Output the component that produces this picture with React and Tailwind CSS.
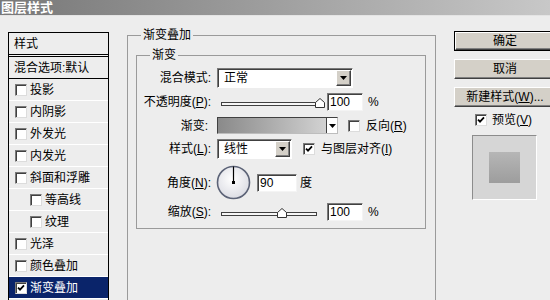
import React from "react";

const Arrow = () => (
  <svg width="7" height="4" viewBox="0 0 7 4">
    <path d="M0 0H7L3.5 4Z" fill="#000" />
  </svg>
);

const Check = ({ checked }) => (
  <span className="flex h-[12px] w-[12px] shrink-0 items-center justify-center border border-t-[#7a7a7a] border-l-[#7a7a7a] border-r-[#dcdcdc] border-b-[#dcdcdc] bg-white shadow-[inset_1px_1px_0_#404040]">
    {checked && (
      <svg width="8" height="8" viewBox="0 0 8 8">
        <path d="M1 3.6L3 5.6L7 1.4" fill="none" stroke="#000" strokeWidth="1.8" />
      </svg>
    )}
  </span>
);

const DropBtn = () => (
  <span className="flex h-full w-[15px] shrink-0 items-center justify-center border border-t-white border-l-white border-r-[#404040] border-b-[#404040] bg-[#d4d0c8] shadow-[inset_-1px_-1px_0_#808080]">
    <Arrow />
  </span>
);

const Select = ({ value, width }) => (
  <div
    className="flex h-[20px] shrink-0 items-stretch border border-t-[#7a7a7a] border-l-[#7a7a7a] border-r-white border-b-white bg-white p-[1px] pl-[6px] shadow-[inset_1px_1px_0_#404040]"
    style={{ width }}
  >
    <span className="flex flex-1 items-center">{value}</span>
    <DropBtn />
  </div>
);

const Field = ({ value, width }) => (
  <div
    className="flex h-[18px] shrink-0 items-center border border-t-[#7a7a7a] border-l-[#7a7a7a] border-r-[#f4f4f4] border-b-[#f4f4f4] bg-white pl-[2px] shadow-[inset_1px_1px_0_#404040]"
    style={{ width }}
  >
    {value}
  </div>
);

const Slider = ({ thumb }) => (
  <div className="relative ml-[4px] h-[18px] w-[96px] shrink-0">
    <div className="mt-[9px] h-[4px] border border-[#404040] bg-[#f6f6f6]" />
    <svg
      className="absolute top-[5px]"
      style={{ left: thumb }}
      width="10"
      height="10"
      viewBox="0 0 10 10"
    >
      <path d="M0.5 9.5V4.5L5 0.5L9.5 4.5V9.5Z" fill="#fff" stroke="#333" />
    </svg>
  </div>
);

const Label = ({ children }) => (
  <span className="mr-[6px] w-[74px] shrink-0 text-right">{children}</span>
);

const Btn = ({ children, def }) => (
  <div className={def ? "border border-black" : ""}>
    <div
      className={
        "flex items-center justify-center border border-t-white border-l-white border-r-[#404040] border-b-[#404040] bg-[#d4d0c8] shadow-[inset_-1px_-1px_0_#808080] " +
        (def ? "h-[18px]" : "h-[20px]")
      }
    >
      {children}
    </div>
  </div>
);

const items = [
  { t: "投影" },
  { t: "内阴影" },
  { t: "外发光" },
  { t: "内发光" },
  { t: "斜面和浮雕" },
  { t: "等高线", indent: true },
  { t: "纹理", indent: true },
  { t: "光泽" },
  { t: "颜色叠加" },
  { t: "渐变叠加", sel: true },
];

export default function App() {
  return (
    <div className="h-[300px] w-[550px] overflow-hidden bg-[#ededed] font-['Liberation_Sans','Noto_Sans_CJK_SC',sans-serif] text-[12px] leading-[14px] text-black">
      <div className="h-[16px] border-b border-[#e4e4e4] bg-linear-to-r from-[#787878] to-[#c8c8c8] pl-[1px] text-[13px] font-bold leading-[15px] text-white">
        图层样式
      </div>

      <div className="flex items-start pl-[8px]">
        {/* style list */}
        <div className="mt-[16px] h-[290px] w-[101px] shrink-0 border border-black bg-[#ededed]">
          <div className="flex h-[21px] items-center pl-[5px]">样式</div>
          <div className="h-[3px] border-y border-black bg-[#f4f4f4]" />
          <div className="flex h-[22px] items-center border-b border-black pl-[5px]">
            混合选项:默认
          </div>
          {items.map((it) => (
            <div
              key={it.t}
              className={
                "flex h-[22px] items-center gap-[3px] border-b border-white " +
                (it.indent ? "pl-[21px] " : "pl-[6px] ") +
                (it.sel ? "bg-[#0a246a] text-white" : "")
              }
            >
              <Check checked={it.sel} />
              <span>{it.t}</span>
            </div>
          ))}
        </div>

        {/* settings */}
        <fieldset className="mt-[13px] ml-[18px] h-[290px] w-[309px] shrink-0 border border-[#9a9a9a]">
          <legend className="ml-[13px] px-[2px] leading-[12px]">渐变叠加</legend>
          <fieldset className="mt-[8px] ml-[8px] w-[290px] border border-[#9a9a9a] pb-[7px]">
            <legend className="ml-[13px] px-[2px] leading-[12px]">渐变</legend>

            <div className="mt-[7px] flex h-[20px] items-center">
              <Label>混合模式:</Label>
              <Select value="正常" width={136} />
            </div>

            <div className="mt-[5px] flex h-[18px] items-center">
              <Label>
                不透明度(<u>P</u>):
              </Label>
              <Slider thumb={94} />
              <div className="ml-[10px]">
                <Field value="100" width={36} />
              </div>
              <span className="ml-[5px]">%</span>
            </div>

            <div className="mt-[6px] flex h-[17px] items-center">
              <Label>
                <span className="pr-[3px]">渐变:</span>
              </Label>
              <div className="flex h-[17px] w-[121px] shrink-0 border border-t-[#404040] border-l-[#404040] border-r-[#bdbdbd] border-b-[#bdbdbd]">
                <div className="flex-1 bg-linear-to-r from-[#8a8a8a] to-[#d2d2d2]" />
                <div className="flex w-[11px] items-center justify-center border-l border-[#404040] bg-white">
                  <Arrow />
                </div>
              </div>
              <span className="ml-[10px]">
                <Check />
              </span>
              <span className="ml-[6px]">
                反向(<u>R</u>)
              </span>
            </div>

            <div className="mt-[5px] flex h-[20px] items-center">
              <Label>
                样式(<u>L</u>):
              </Label>
              <Select value="线性" width={75} />
              <span className="ml-[11px]">
                <Check checked />
              </span>
              <span className="ml-[6px]">
                与图层对齐(<u>I</u>)
              </span>
            </div>

            <div className="mt-[6px] flex h-[35px] items-center">
              <Label>
                角度(<u>N</u>):
              </Label>
              <svg className="ml-[-1px] shrink-0" width="35" height="35" viewBox="0 0 35 35">
                <defs>
                  <radialGradient id="dial" cx="45%" cy="40%" r="60%">
                    <stop offset="0" stopColor="#ffffff" />
                    <stop offset="1" stopColor="#dcdde4" />
                  </radialGradient>
                </defs>
                <circle cx="17.5" cy="17.5" r="16" fill="url(#dial)" stroke="#5c6377" strokeWidth="1.6" />
                <line x1="17.5" y1="17.5" x2="17.5" y2="1.5" stroke="#000" strokeWidth="1.2" />
                <rect x="16" y="16" width="3" height="3" fill="#000" />
              </svg>
              <div className="ml-[6px]">
                <Field value="90" width={40} />
              </div>
              <span className="ml-[3px]">度</span>
            </div>

            <div className="mt-[3px] flex h-[18px] items-center">
              <Label>
                缩放(<u>S</u>):
              </Label>
              <Slider thumb={56} />
              <div className="ml-[10px]">
                <Field value="100" width={36} />
              </div>
              <span className="ml-[5px]">%</span>
            </div>
          </fieldset>
        </fieldset>

        {/* buttons */}
        <div className="mt-[15px] ml-[18px] flex w-[102px] shrink-0 flex-col">
          <Btn def>确定</Btn>
          <div className="mt-[8px]">
            <Btn>取消</Btn>
          </div>
          <div className="mt-[8px]">
            <Btn>
              新建样式(<u>W</u>)...
            </Btn>
          </div>
          <div className="mt-[7px] ml-[21px] flex h-[12px] items-center gap-[5px]">
            <Check checked />
            <span>
              预览(<u>V</u>)
            </span>
          </div>
          <div className="mt-[9px] ml-[18px] flex h-[65px] w-[65px] items-center justify-center border border-t-[#8c8c8c] border-l-[#8c8c8c] border-r-white border-b-white bg-[#d6d6d6]">
            <div className="h-[31px] w-[31px] bg-linear-to-b from-[#b6b6b6] to-[#9d9d9d]" />
          </div>
        </div>
      </div>
    </div>
  );
}
